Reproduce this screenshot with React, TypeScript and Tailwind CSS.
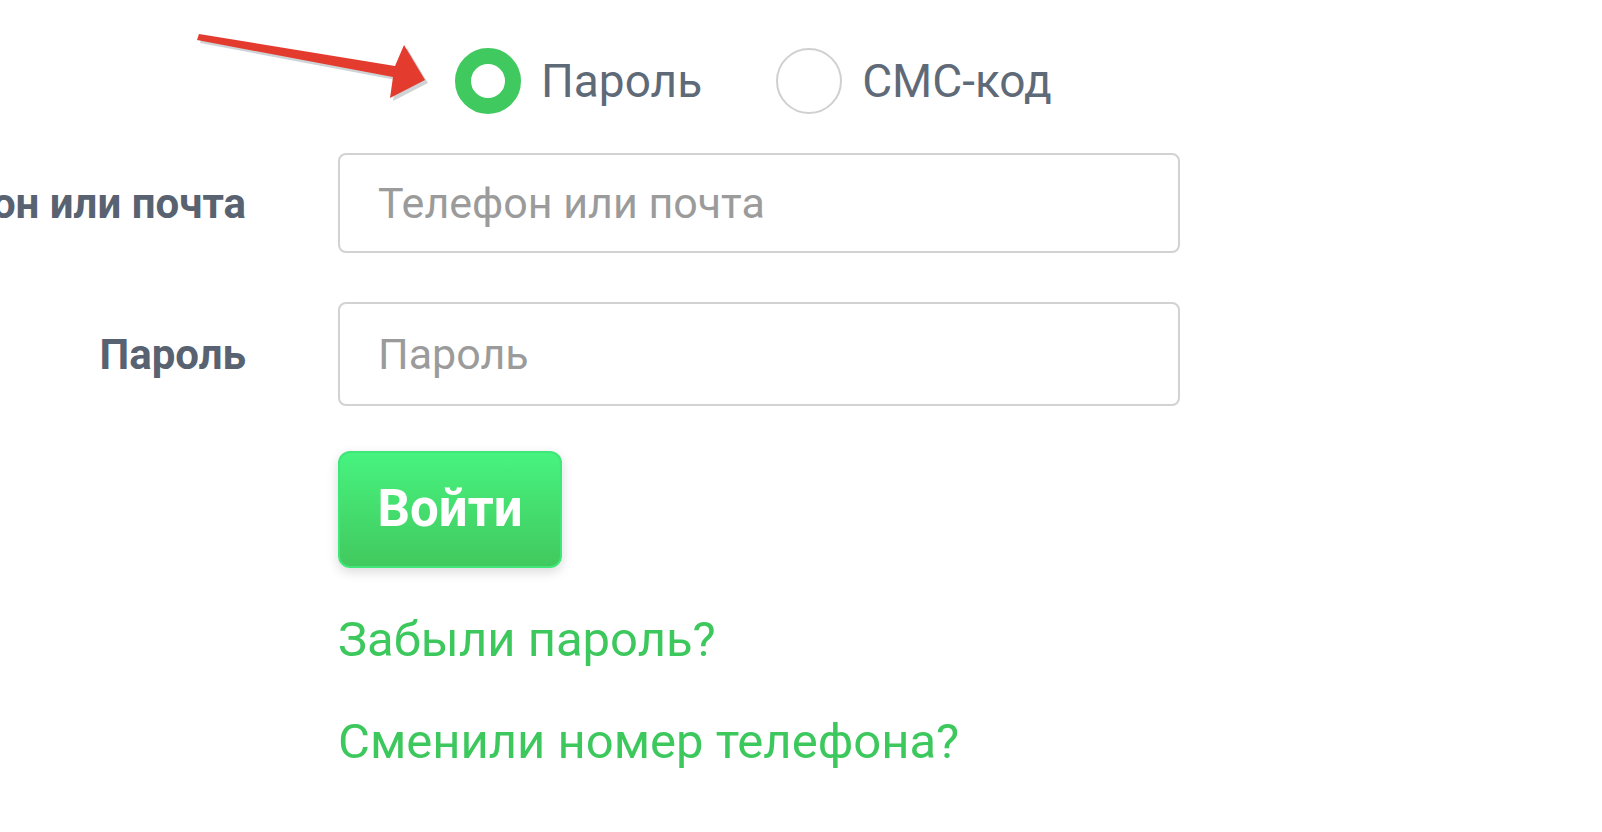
import { useState } from "react";

function Arrow() {
  return (
    <svg
      className="absolute left-[190px] top-[30px]"
      width="250"
      height="85"
      viewBox="0 0 250 85"
    >
      {/* shadow */}
      <g transform="translate(3,3)" fill="#b9c0c4" opacity="0.7">
        <polygon points="9,4 205,36 214,15 235,50 200,68 203,47 7,10" />
      </g>
      <polygon
        fill="#e33b2e"
        points="9,4 205,36 214,15 235,50 200,68 203,47 7,10"
      />
    </svg>
  );
}

function Radio({
  checked,
  label,
  onClick,
}: {
  checked: boolean;
  label: string;
  onClick: () => void;
}) {
  return (
    <button
      type="button"
      onClick={onClick}
      className="flex items-center gap-5"
    >
      <span
        className={
          checked
            ? "w-[66px] h-[66px] rounded-full border-[16px] border-[#40c95f] bg-white"
            : "w-[66px] h-[66px] rounded-full border-2 border-[#d0d0d0] bg-white"
        }
      />
      <span className="text-[46px] leading-none text-[#5f6a78]">
        {label}
      </span>
    </button>
  );
}

export default function App() {
  const [mode, setMode] = useState("password");

  return (
    <div className="relative min-h-[832px] bg-white overflow-hidden font-['Roboto',sans-serif]">
      <Arrow />

      <div className="pt-[48px] grid grid-cols-[246px_842px] gap-x-[92px]">
        {/* radios */}
        <div />
        <div className="flex items-center gap-[74px] pl-[117px] h-[66px]">
          <Radio
            checked={mode === "password"}
            label="Пароль"
            onClick={() => setMode("password")}
          />
          <Radio
            checked={mode === "sms"}
            label="СМС-код"
            onClick={() => setMode("sms")}
          />
        </div>

        {/* login */}
        <div className="flex justify-end items-center mt-[39px]">
          <span className="whitespace-nowrap text-[42px] font-bold text-[#586271]">
            Телефон или почта
          </span>
        </div>
        <input
          placeholder="Телефон или почта"
          className="mt-[39px] h-[100px] rounded-[8px] border-2 border-[#d2d2d2] px-[38px] text-[43px] text-[#555] placeholder:text-[#9b9b9b] outline-none"
        />

        {/* password */}
        <div className="flex justify-end items-center mt-[49px]">
          <span className="whitespace-nowrap text-[42px] font-bold text-[#586271]">
            Пароль
          </span>
        </div>
        <input
          type="password"
          placeholder="Пароль"
          className="mt-[49px] h-[104px] rounded-[8px] border-2 border-[#d2d2d2] px-[38px] text-[43px] text-[#555] placeholder:text-[#9b9b9b] outline-none"
        />

        {/* submit */}
        <div />
        <div className="mt-[45px]">
          <button className="w-[224px] h-[117px] rounded-[12px] border-2 border-[#3fe678] bg-gradient-to-b from-[#47f37f] to-[#41c95e] text-white text-[51px] font-bold shadow-[0_4px_12px_rgba(0,0,0,0.15)]">
            Войти
          </button>
        </div>

        {/* links */}
        <div />
        <div className="flex flex-col items-start gap-[52px] mt-[47px]">
          <a className="text-[49px] leading-[50px] text-[#3cc85c]" href="#">
            Забыли пароль?
          </a>
          <a className="text-[49px] leading-[50px] text-[#3cc85c]" href="#">
            Сменили номер телефона?
          </a>
        </div>
      </div>
    </div>
  );
}
